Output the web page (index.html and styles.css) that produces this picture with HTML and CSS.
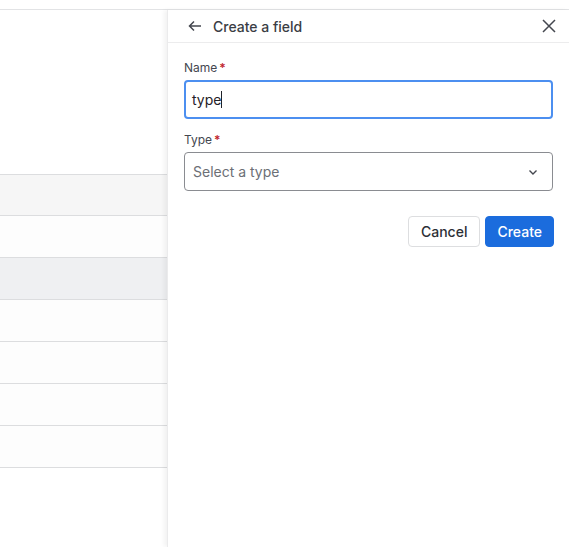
FILE: index.html
```html
<!DOCTYPE html>
<html lang="en">
<head>
  <meta charset="UTF-8" />
  <title>Create a field</title>
  <link rel="stylesheet" href="styles.css">
</head>
<body>
  <div class="topbar"></div>
  <div class="main">
    <div class="lista">
      <div class="espaco"></div>
      <div class="linha cinza"></div>
      <div class="linha"></div>
      <div class="linha azulada"></div>
      <div class="linha"></div>
      <div class="linha"></div>
      <div class="linha"></div>
      <div class="linha"></div>
    </div>

    <div class="painel">
      <div class="painel-topo">
        <svg class="icone" width="16" height="16" viewBox="0 0 16 16">
          <path d="M14 8H2.5M7 3.5L2.5 8L7 12.5" fill="none" stroke="#44474f" stroke-width="1.5"/>
        </svg>
        <span class="titulo">Create a field</span>
        <svg class="fechar" width="14" height="14" viewBox="0 0 14 14">
          <path d="M1 1L13 13M13 1L1 13" fill="none" stroke="#44474f" stroke-width="1.5"/>
        </svg>
      </div>
      <div class="form">
        <label>Name<span class="obrig">*</span></label>
        <div class="campo ativo">type<span class="cursor"></span></div>
        <label>Type<span class="obrig">*</span></label>
        <div class="campo select">
          <span class="placeholder">Select a type</span>
          <svg width="12" height="12" viewBox="0 0 12 12">
            <path d="M2.5 4.5L6 8L9.5 4.5" fill="none" stroke="#44474f" stroke-width="1.4"/>
          </svg>
        </div>
        <div class="acoes">
          <button class="cancelar">Cancel</button>
          <button class="criar">Create</button>
        </div>
      </div>
    </div>
  </div>
</body>
</html>
```

FILE: styles.css
```css
body {
  margin: 0;
  font-family: Inter, "Noto Sans", sans-serif;
  background: #fff;
  color: #2c2f36;
}
.topbar {
  height: 9px;
  border-bottom: 1px solid #e2e3e5;
}
.main {
  display: flex;
  height: 537px;
}
.lista {
  width: 167px;
}
.espaco {
  height: 164px;
  border-bottom: 1px solid #dcdddf;
}
.linha {
  height: 41px;
  border-bottom: 1px solid #dcdddf;
  background: #fdfdfd;
}
.linha.cinza {
  height: 40px;
  background: #f6f6f6;
}
.linha.azulada {
  background: #eff0f2;
}
.painel {
  flex: 1;
  border-left: 1px solid #ebebec;
  box-shadow: -3px 0 4px rgba(0, 0, 0, 0.05);
  background: #fff;
}
.painel-topo {
  display: flex;
  align-items: center;
  height: 32px;
  padding: 0 13px 0 19px;
  border-bottom: 1px solid #ececed;
}
.titulo {
  margin-left: 10px;
  font-size: 14px;
  font-weight: 500;
  color: #3a3d44;
  flex: 1;
}
.form {
  padding: 17px 16px 0 16px;
}
label {
  display: block;
  font-size: 12px;
  color: #44474f;
  margin-bottom: 5px;
}
.obrig {
  color: #c0262d;
  font-weight: 600;
  margin-left: 2px;
}
.campo {
  height: 39px;
  box-sizing: border-box;
  border: 1px solid #8a8c91;
  border-radius: 4px;
  display: flex;
  align-items: center;
  padding: 0 8px;
  font-size: 14px;
  margin-bottom: 13px;
}
.campo.ativo {
  border: 2px solid #4c8ff0;
  padding: 0 6px;
  color: #1f2229;
}
.cursor {
  display: inline-block;
  width: 1px;
  height: 17px;
  background: #1f2229;
}
.select {
  justify-content: space-between;
  padding-right: 13px;
}
.placeholder {
  color: #6c6f76;
}
.acoes {
  display: flex;
  justify-content: flex-end;
  gap: 5px;
  margin-top: 25px;
  margin-right: -1px;
}
.acoes button {
  height: 31px;
  border-radius: 4px;
  font-family: inherit;
  font-size: 14px;
  font-weight: 500;
  padding: 0 11px;
  cursor: pointer;
}
.cancelar {
  background: #fff;
  border: 1px solid #dddee0;
  color: #2c2f36;
  padding: 0 12px !important;
}
.criar {
  background: #1b6cdd;
  border: 1px solid #1b6cdd;
  color: #fff;
}
```
